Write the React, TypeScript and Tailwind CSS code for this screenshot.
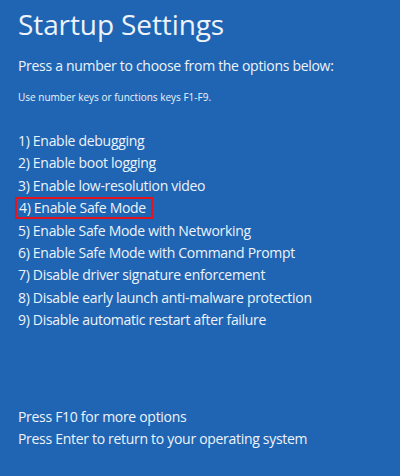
const options = [
  "1) Enable debugging",
  "2) Enable boot logging",
  "3) Enable low-resolution video",
  "4) Enable Safe Mode",
  "5) Enable Safe Mode with Networking",
  "6) Enable Safe Mode with Command Prompt",
  "7) Disable driver signature enforcement",
  "8) Disable early launch anti-malware protection",
  "9) Disable automatic restart after failure",
];

export default function App() {
  return (
    <div
      className="flex h-[476px] w-[400px] flex-col bg-[#1f65b3] pl-[18px] text-[#eef3fa]"
      style={{ fontFamily: '"Open Sans", "Noto Sans", sans-serif' }}
    >
      <h1 className="mt-[6px] text-[28px] leading-[36px] tracking-[-0.1px]">Startup Settings</h1>

      <p className="mt-[14px] text-[14px] leading-[20px] tracking-[-0.3px]">
        Press a number to choose from the options below:
      </p>
      <p className="mt-[14px] text-[10px] leading-[14px]">
        Use number keys or functions keys F1-F9.
      </p>

      <ul className="mt-[26px] flex flex-col text-[14px] tracking-[-0.3px]">
        {options.map((opt, i) => (
          <li key={opt} className="h-[22.4px] leading-[22px]">
            {i === 3 ? (
              <span className="-ml-[3px] inline-block border-2 border-[#e3141e] pl-[2px] pr-[5px] leading-[18px]">
                {opt}
              </span>
            ) : (
              opt
            )}
          </li>
        ))}
      </ul>

      <div className="mt-auto mb-[26px] flex flex-col text-[14px] leading-[22px] tracking-[-0.3px]">
        <p>Press F10 for more options</p>
        <p>Press Enter to return to your operating system</p>
      </div>
    </div>
  );
}
